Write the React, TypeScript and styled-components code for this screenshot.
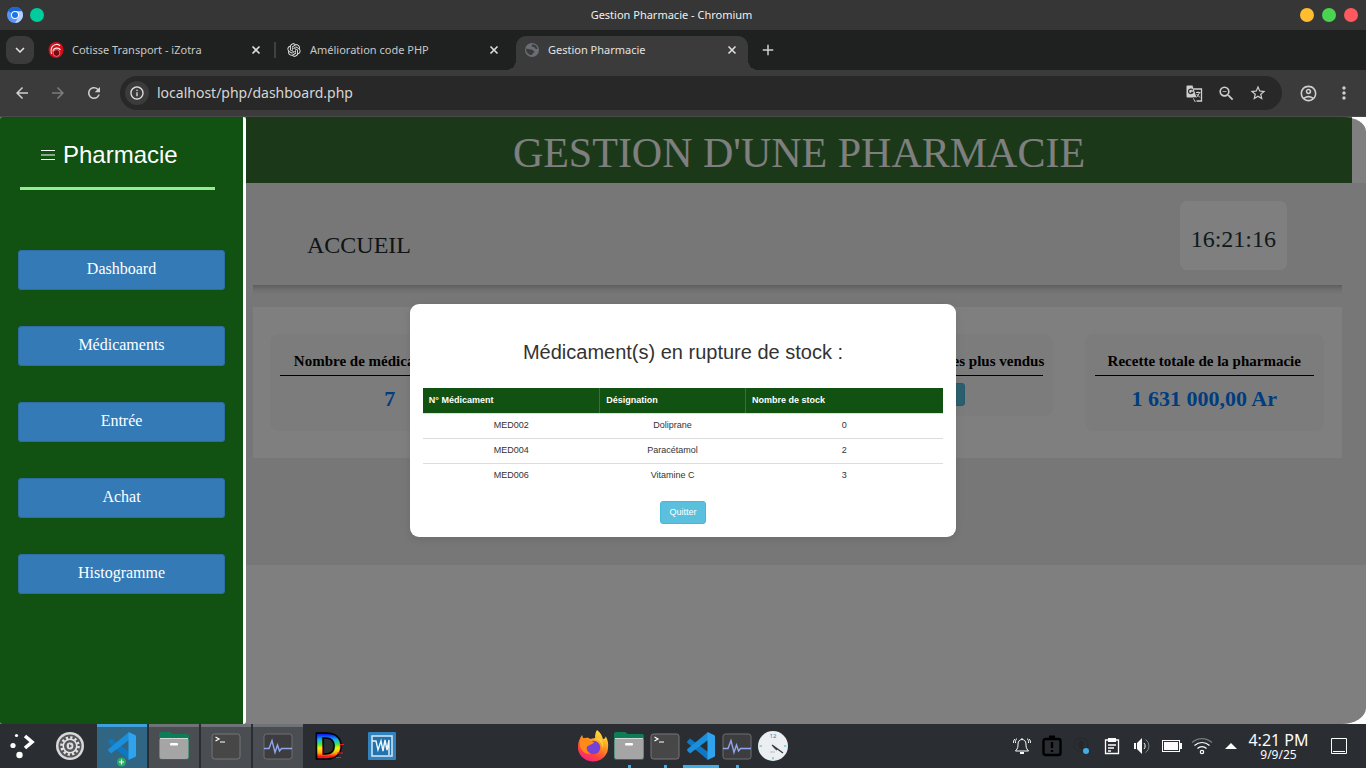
import React from "react";
import styled, { createGlobalStyle } from "styled-components";
import {
  MdAdd,
  MdArrowBack,
  MdArrowForward,
  MdInfoOutline,
  MdKeyboardArrowDown,
  MdMoreVert,
  MdOutlineAccountCircle,
  MdRefresh,
  MdStarBorder,
  MdZoomOut,
} from "react-icons/md";
import { RiOpenaiFill } from "react-icons/ri";

const serif = `"Liberation Serif", "Times New Roman", serif`;
const sans = `"Liberation Sans", Arial, sans-serif`;
const ui = `"Noto Sans", sans-serif`;

const GlobalStyle = createGlobalStyle`
  *, *::before, *::after { box-sizing: border-box; }
  body { margin: 0; background: #fff; }
  h1, h2, h3, p { margin: 0; font-weight: normal; }
  button, input { font: inherit; color: inherit; border: 0; padding: 0; margin: 0; background: none; }
  svg { display: block; flex: none; overflow: visible; }
`;

const Desktop = styled.div`
  display: flex;
  flex-direction: column;
  min-height: 100vh;
  font-family: ${ui};
`;

/* ---------- window frame ---------- */

const TitleBar = styled.header`
  display: grid;
  grid-template-columns: 1fr auto 1fr;
  align-items: center;
  height: 30px;
  padding: 0 8px 0 7px;
  background: #363636;
  color: #f0f0f0;
  font-size: 11px;
`;

const WindowTitle = styled.span`
  margin-right: 22px;
  padding-bottom: 2px;
`;

const DotGroup = styled.div<{ $end?: boolean; $gap: number }>`
  display: flex;
  align-items: center;
  justify-content: ${(p) => (p.$end ? "flex-end" : "flex-start")};
  gap: ${(p) => p.$gap}px;
`;

const Dot = styled.button<{ $color: string }>`
  width: 14px;
  height: 14px;
  border-radius: 50%;
  background: ${(p) => p.$color};
`;

const TabStrip = styled.div`
  display: flex;
  align-items: flex-end;
  height: 40px;
  padding-left: 6px;
  background: #1f2120;
`;

const TabSearch = styled.button`
  display: grid;
  place-items: center;
  width: 28px;
  height: 28px;
  margin: 0 6px 6px 0;
  border-radius: 9px;
  background: #3b3b3b;
  color: #e6e6e6;
`;

const Tab = styled.div<{ $active?: boolean; $divider?: boolean }>`
  position: relative;
  display: flex;
  align-items: center;
  width: 232px;
  height: 34px;
  margin-right: 6px;
  padding: 0 8px 6px;
  border-radius: 10px 10px 0 0;
  background: ${(p) => (p.$active ? "#3b3b3b" : "transparent")};
  color: ${(p) => (p.$active ? "#e3e3e3" : "#c7c7c7")};
  font-size: 11px;

  &::before,
  &::after {
    content: "";
    display: ${(p) => (p.$active ? "block" : "none")};
    position: absolute;
    bottom: 0;
    width: 10px;
    height: 10px;
  }
  &::before {
    left: -10px;
    background: radial-gradient(circle at 0 0, transparent 10px, #3b3b3b 10px);
  }
  &::after {
    display: ${(p) => (p.$active || p.$divider ? "block" : "none")};
    ${(p) =>
      p.$divider
        ? "right: -4px; bottom: 12px; width: 2px; height: 16px; background: #3f4140;"
        : "right: -10px; background: radial-gradient(circle at 100% 0, transparent 10px, #3b3b3b 10px);"}
  }
`;

const TabTitle = styled.button`
  flex: 1;
  margin-left: 8px;
  padding-bottom: 2px;
  text-align: left;
  white-space: nowrap;
`;

const IconButton = styled.button<{ $size?: number; $dim?: boolean }>`
  display: grid;
  place-items: center;
  width: ${(p) => p.$size ?? 36}px;
  height: ${(p) => p.$size ?? 36}px;
  color: ${(p) => (p.$dim ? "#7c7c7c" : "#cfcfcf")};
`;

const NewTab = styled(IconButton)`
  align-self: center;
  margin-left: -4px;
`;

const Toolbar = styled.div`
  display: flex;
  align-items: center;
  height: 47px;
  padding: 0 4px;
  border-bottom: 1px solid #4a4a4a;
  background: #3b3b3b;
`;

const AddressBar = styled.div`
  display: flex;
  align-items: center;
  flex: 1;
  height: 34px;
  margin: 0 8px;
  padding: 0 8px 0 5px;
  border-radius: 17px;
  background: #282828;
`;

const SiteInfo = styled.button`
  display: grid;
  place-items: center;
  width: 24px;
  height: 24px;
  border-radius: 50%;
  background: #3b3b3b;
  color: #e0e0e0;
`;

const Url = styled.input`
  flex: 1;
  min-width: 0;
  margin-left: 8px;
  padding-bottom: 2px;
  color: #d6d6d6;
  font-size: 14px;
  outline: none;
`;

/* ---------- web page ---------- */

const Page = styled.div`
  position: relative;
  display: flex;
  flex: 1;
  background: #fff;
`;

const Sidebar = styled.nav`
  position: relative;
  z-index: 2;
  flex: none;
  width: 246px;
  padding: 20px 18px 0;
  border-right: 3px solid #fff;
  border-radius: 3px;
  background: #115111;
`;

const Brand = styled.h2`
  display: flex;
  align-items: center;
  gap: 8px;
  height: 53px;
  margin: 0 10px 60px 2px;
  padding: 0 0 14px 21px;
  border-bottom: 3px solid #90ee90;
  color: #fff;
  font: 24px/34px ${sans};
`;

const NavButton = styled.button`
  display: block;
  width: 100%;
  height: 40px;
  margin-bottom: 36px;
  padding-bottom: 3px;
  border: 1px solid #2e6da4;
  border-radius: 3px;
  background: #337ab7;
  color: #fff;
  font: 16px/20px ${serif};
`;

const Main = styled.main`
  flex: 1;
  min-width: 0;
  font-family: ${serif};
`;

const Banner = styled.h1`
  height: 66px;
  margin-right: 14px;
  padding-top: 8px;
  background: #367233;
  color: #fff;
  font-size: 42px;
  line-height: 56px;
  text-align: center;
`;

const Content = styled.section`
  padding: 0 24px 107px 7px;
  background: #eee;
`;

const SectionHead = styled.div`
  position: relative;
  display: flex;
  align-items: flex-start;
  justify-content: space-between;
  height: 102px;
  margin-bottom: 22px;
  padding: 18px 55px 0 54px;
  color: #1f343a;

  &::after {
    content: "";
    position: absolute;
    inset: 100% 0 auto 0;
    height: 10px;
    background: linear-gradient(#bcbcbc, #e0e0e0 50%, #eee);
  }
`;

const SectionTitle = styled.h2`
  padding-top: 30px;
  color: #22282c;
  font-size: 24px;
  line-height: 28px;
`;

const Clock = styled.p`
  height: 69px;
  padding: 24px 11px 0;
  border-radius: 7px;
  background: #fff;
  font-size: 24px;
  line-height: 28px;
`;

const Panel = styled.div`
  display: grid;
  grid-template-columns: repeat(4, minmax(0, 1fr));
  align-items: start;
  gap: 32px;
  padding: 27px 18px 27px 17px;
  background: #fff;
`;

const Card = styled.article`
  padding: 16px 10px 10px;
  border-radius: 8px;
  background: #f9f9f9;
  text-align: center;
  white-space: nowrap;
`;

const CardTitle = styled.h3`
  height: 26px;
  margin-bottom: 7px;
  border-bottom: 1px solid #000;
  color: #000;
  font-size: 15px;
  font-weight: bold;
  line-height: 23px;
`;

const CardValue = styled.p`
  margin-bottom: 7px;
  color: #007bff;
  font-size: 22px;
  font-weight: bold;
  line-height: 31px;
`;

const InfoButton = styled.button`
  height: 23px;
  padding: 0 8px;
  border: 1px solid #46b8da;
  border-radius: 3px;
  background: #5bc0de;
  color: #fff;
  font: 9px/13px ${sans};
`;

const CardButton = styled(InfoButton)`
  display: block;
  width: 64px;
  margin: 0 auto;
`;

const Overlay = styled.div`
  position: absolute;
  inset: 0;
  z-index: 1;
  display: grid;
  place-items: center;
  border-radius: 0 24px 24px 0 / 0 14px 16px 0;
  background: rgba(0, 0, 0, 0.5);
`;

const Modal = styled.div`
  width: 40%;
  padding: 13px;
  border-radius: 9px;
  background: #fff;
  color: #333;
  font-family: ${sans};
  text-align: center;
  box-shadow: 0 2px 8px rgba(0, 0, 0, 0.1);
`;

const ModalTitle = styled.h2`
  font-size: 20px;
  line-height: 71px;
`;

const StockTable = styled.table`
  width: 100%;
  margin-bottom: 13px;
  border-collapse: collapse;
  table-layout: fixed;
  font-size: 9px;
  line-height: 13px;

  th,
  td {
    height: 25px;
    padding: 0 6px;
    border-bottom: 1px solid #ddd;
  }
  th {
    border-right: 1px solid #3a6f3a;
    background: #115111;
    color: #fff;
    text-align: left;
  }
  th:last-child {
    border-right: 0;
  }
  tr:last-child td {
    border-bottom: 0;
  }
`;

const Col = styled.col<{ $width: string }>`
  width: ${(p) => p.$width};
`;

/* ---------- taskbar ---------- */

const Taskbar = styled.footer`
  display: grid;
  grid-template-columns: 1fr auto 1fr;
  height: 44px;
  background: #2a2e32;
  color: #fcfcfc;
`;

const TaskGroup = styled.div<{ $end?: boolean }>`
  display: flex;
  align-items: center;
  justify-content: ${(p) => (p.$end ? "flex-end" : "flex-start")};
`;

const Launcher = styled.button<{ $width: number }>`
  display: grid;
  place-items: center;
  width: ${(p) => p.$width}px;
  height: 44px;
`;

const Task = styled.button<{ $active?: boolean }>`
  display: grid;
  place-items: center;
  width: 50px;
  height: 44px;
  margin-right: 2px;
  background: ${(p) => (p.$active ? "#306683" : "#4a4d51")};
  box-shadow: inset 0 3px ${(p) => (p.$active ? "#3d9fdb" : "#6f7276")};
`;

const DockItem = styled.button<{ $mark?: "dot" | "line" }>`
  display: flex;
  flex-direction: column;
  align-items: center;
  justify-content: space-between;
  width: 36px;
  height: 44px;
  padding-top: 6px;

  &::after {
    content: "";
    width: ${(p) => (p.$mark === "line" ? 36 : 3)}px;
    height: 3px;
    background: ${(p) => (p.$mark ? "#3daee9" : "transparent")};
  }
`;

const TrayButton = styled.button<{ $narrow?: boolean }>`
  display: grid;
  place-items: center;
  width: ${(p) => (p.$narrow ? 28 : 30)}px;
  height: 44px;
`;

const TrayClock = styled.button`
  display: flex;
  flex-direction: column;
  align-items: center;
  justify-content: center;
  width: 67px;
  height: 44px;
  padding-top: 2px;
`;

const TrayTime = styled.span`
  font-size: 16px;
  line-height: 16px;
`;

const TrayDate = styled.span`
  font-size: 12px;
  line-height: 14px;
`;

/* ---------- drawings ---------- */

const ChromiumLogo = () => (
  <svg width="16" height="16" viewBox="0 0 16 16">
    <circle cx="8" cy="8" r="8" fill="#5a95f5" />
    <path d="M8 8 L1 4 A8 8 0 0 1 15 4.2 L8 4.2Z" fill="#1a66d8" />
    <path d="M8 4.2H15A8 8 0 0 1 8 16L11.6 9.8Z" fill="#b5d1fb" />
    <circle cx="8" cy="8" r="4" fill="#fff" />
    <circle cx="8" cy="8" r="3" fill="#1a73e8" />
  </svg>
);

const CotisseIcon = () => (
  <svg width="16" height="16" viewBox="0 0 16 16">
    <ellipse cx="8" cy="8" rx="7.500" ry="8" fill="#cf0f1a" />
    <path d="M3.500 12C2 7 4 3 8 2.500 10 2.300 11.500 3 12 4" fill="none" stroke="#ffe3e3" strokeWidth="1.200" />
    <path d="M5 9.500C5 5.500 11 5 12.500 8" fill="none" stroke="#ffe3e3" strokeWidth="1.200" />
    <circle cx="8.500" cy="11" r="3.400" fill="#7a0810" stroke="#f3a4a4" strokeWidth=".7" />
  </svg>
);

const GlobeIcon = () => (
  <svg width="16" height="16" viewBox="0 0 16 16">
    <circle cx="8" cy="8" r="7" fill="#6a6e74" />
    <path d="M2 7C4 6 5.500 7.500 7.500 7.500 9 7.500 8.500 9 10 9 11 9.500 10 11 8.500 11.500L8 13C5 13 2.500 11 2 7ZM8 2.500C7 4 8 5 9.500 5 11 5 10.500 6.500 12 7L13.500 7C13 4 11 2 8 2.500Z" fill="#3b3b3b" />
  </svg>
);

const CloseIcon = () => (
  <svg width="10" height="10" viewBox="0 0 10 10">
    <path d="M1.500 1.500L8.500 8.500M8.500 1.500L1.500 8.500" stroke="#dedede" strokeWidth="1.600" />
  </svg>
);

const TranslateIcon = () => (
  <svg width="17" height="17" viewBox="0 0 17 17">
    <path d="M7.500 4H15.500V16H9L7.500 13" fill="none" stroke="#cfcfcf" strokeWidth="1.300" />
    <path d="M10 7.500H14.500M12 6.500V7.500M10.500 12.500L13.500 8M10.500 9L14 12.500" fill="none" stroke="#cfcfcf" />
    <path d="M1.500 .5H6.500L10.500 12.500H1.500Q.5 12.500 .5 11.500V1.500Q.5 .5 1.500 .5Z" fill="#cfcfcf" />
    <path d="M6.800 5.200A2.300 2.300 0 1 0 7 7.200H4.800M8 13L10 16V13Z" fill="none" stroke="#282828" strokeWidth="1.100" />
  </svg>
);

const MenuIcon = () => (
  <svg width="14" height="10" viewBox="0 0 14 10">
    <path d="M0 .5H14M0 5H14M0 9.500H14" stroke="#fff" strokeWidth="1.200" />
  </svg>
);

const KdeIcon = () => (
  <svg width="28" height="28" viewBox="0 0 28 28" fill="#fff">
    <circle cx="8.500" cy="3.500" r="1.600" />
    <circle cx="5" cy="13.500" r="2.600" />
    <circle cx="11.500" cy="23" r="3.200" />
    <path d="M17 4L24 10L17 16" fill="none" stroke="#fff" strokeWidth="3.600" />
  </svg>
);

const SettingsIcon = () => (
  <svg width="30" height="30" viewBox="0 0 30 30">
    <circle cx="15" cy="15" r="14" fill="#d8d8d8" />
    <circle cx="15" cy="15" r="11.500" fill="#55585b" />
    <circle cx="15" cy="15" r="8.500" fill="none" stroke="#e4e4e4" strokeWidth="2.600" strokeDasharray="2.200 2.250" />
    <circle cx="15" cy="15" r="6.800" fill="none" stroke="#e4e4e4" strokeWidth="1.600" />
    <circle cx="15" cy="15" r="3.400" fill="#dcdcdc" />
    <path d="M14 13L17 15L14 17Z" fill="#55585b" />
  </svg>
);

const CodeIcon = ({ badge }: { badge?: boolean }) => (
  <svg width="32" height={badge ? 40 : 32} viewBox={badge ? "0 -4 32 40" : "0 0 32 32"}>
    <path d="M5 8.500L23 22V30L2.500 13Q1.500 12 2.500 11Z" fill="#0f78c2" />
    <path d="M5 23.500L23 10V2L2.500 19Q1.500 20 2.500 21Z" fill="#1b8fdc" />
    <path d="M22.500 2L29 5Q30 5.500 30 6.500V25.500Q30 26.500 29 27L22.500 30Z" fill="#2fa3ee" />
    {badge && (
      <>
        <circle cx="15.500" cy="32" r="4.500" fill="#27ae60" />
        <path d="M15.500 29.500V34.500M13 32H18" stroke="#fff" strokeWidth="1.200" />
      </>
    )}
  </svg>
);

const FolderIcon = () => (
  <svg width="32" height="32" viewBox="0 0 32 32">
    <path d="M1 4Q1 2 3 2H12L15 4H29Q31 4 31 6V14H1Z" fill="#0c7d55" />
    <rect x="1" y="8" width="30" height="22" rx="2" fill="#117a55" />
    <rect x="1.500" y="8" width="29" height="21" rx="2" fill="#a5a5a5" />
    <path d="M2 8.500H30" stroke="#d5d5d5" />
    <rect x="12" y="13" width="8" height="2.500" rx="1" fill="#fff" />
  </svg>
);

const TerminalIcon = () => (
  <svg width="32" height="32" viewBox="0 0 32 32">
    <rect x="2" y="4" width="28" height="25" rx="2.500" fill="#474747" stroke="#777" />
    <path d="M5.500 7L9 9L5.500 11M10 12H15" fill="none" stroke="#fff" strokeWidth="1.200" />
  </svg>
);

const MonitorIcon = () => (
  <svg width="32" height="32" viewBox="0 0 32 32">
    <rect x="2" y="4" width="28" height="25" rx="2.500" fill="#3d3d3f" stroke="#6f6f72" />
    <path d="M2 18.500H7L10 10.500L13 22.500L15.500 15L17.500 21L19.500 18.500H30" fill="none" stroke="#8fa6ee" strokeWidth="1.400" />
  </svg>
);

const RainbowDIcon = () => (
  <svg width="32" height="32" viewBox="0 0 32 32">
    <defs>
      <linearGradient id="rainbow" x1="0" y1="0.2" x2="0" y2=".85">
        <stop offset="0" stopColor="#0b1cf0" />
        <stop offset=".22" stopColor="#17b8f2" />
        <stop offset=".38" stopColor="#4be83c" />
        <stop offset=".52" stopColor="#ffee10" />
        <stop offset=".7" stopColor="#ffae10" />
        <stop offset=".84" stopColor="#fb1414" />
        <stop offset="1" stopColor="#c70bbd" />
      </linearGradient>
    </defs>
    <text x="0" y="29" fontFamily="DejaVu Sans" fontWeight="bold" fontSize="36" fill="url(#rainbow)" stroke="#000" strokeWidth="1.500">D</text>
    <path d="M27 14.500H31M24 23H30M23 27.500H28" stroke="#f01818" />
  </svg>
);

const WaveIcon = () => (
  <svg width="28" height="28" viewBox="0 0 28 28">
    <rect width="28" height="28" rx="1" fill="#3283bd" />
    <rect x="4" y="4" width="20" height="20" fill="#2273ad" stroke="#d7e9f5" strokeWidth="1.500" />
    <path d="M4 9H8L10 18L13 9L15 19L17 8L19 18L21 8V23" fill="none" stroke="#eef6fb" strokeWidth="1.400" />
  </svg>
);

const FirefoxIcon = () => (
  <svg width="32" height="32" viewBox="0 0 32 32">
    <defs>
      <linearGradient id="fox" x1=".8" y1="0" x2=".3" y2="1">
        <stop offset="0" stopColor="#fff04a" />
        <stop offset=".4" stopColor="#ff9a1f" />
        <stop offset=".75" stopColor="#ff4438" />
        <stop offset="1" stopColor="#f5208c" />
      </linearGradient>
    </defs>
    <path d="M20 0C24 3 25 6 26 9C28 9 29 7 28.500 6C31 10 31.500 14 31 18A15 14 0 0 1 1 17C1 12 2.500 9 5 5L6.500 9C9 7 12 8 13 9L18 8C18 5 18.500 2 20 0Z" fill="url(#fox)" />
    <circle cx="16.500" cy="17.500" r="6.800" fill="#7542d8" />
    <path d="M3 9C6 7 11 8 12.500 10.500L17 12C16 15 12 14 11.500 16C8 16 9 22 14 23.500C9 25 4 21 3 16Z" fill="#ff8a1c" />
    <path d="M17 9C22 9 26 13 25 19C27 15 26 11 23 8Z" fill="#ffd235" />
  </svg>
);

const ClockIcon = () => (
  <svg width="32" height="32" viewBox="0 0 32 32">
    <circle cx="16" cy="16" r="15" fill="#eceff1" />
    <text x="16" y="8" textAnchor="middle" fontFamily="Noto Sans" fontSize="6" fill="#2980b9">12</text>
    <path d="M2.500 16H5M27 16H29.500M16 27V29.500" stroke="#3daee9" />
    <path d="M15 15L26 23M16 16L20 20" stroke="#3a3f43" strokeWidth="1.500" />
    <path d="M13 22H18" stroke="#b9bdc0" />
  </svg>
);

const BellIcon = () => (
  <svg width="18" height="18" viewBox="0 0 18 18" fill="none" stroke="#fcfcfc">
    <path d="M2.500 14C5 11 5 10 5 7C5 4 7 2.500 9 2.500S13 4 13 7C13 10 13 11 15.500 14ZM9 1V2.500M4 1.500C2.500 2.500 2.500 4 2.500 6M2 2C.5 3 .5 5 .5 6M14 1.500C15.500 2.500 15.500 4 15.500 6M16 2C17.500 3 17.500 5 17.500 6" />
    <path d="M7 16H11" strokeWidth="2" />
  </svg>
);

const AlertClipIcon = () => (
  <svg width="22" height="24" viewBox="0 0 22 24" fill="none" stroke="#000">
    <rect x="2.500" y="5" width="17" height="16" rx="2" strokeWidth="2.400" />
    <path d="M8 3.500H14" strokeWidth="4" />
    <path d="M11 8V14M11 16V18" strokeWidth="2.400" />
  </svg>
);

const UpdateIcon = () => (
  <svg width="18" height="18" viewBox="0 0 18 18">
    <circle cx="8" cy="8" r="7" fill="none" stroke="#24282b" />
    <path d="M8 3L12 7.500H10V12H6V7.500H4Z" fill="#24282b" />
    <circle cx="13" cy="14" r="3" fill="#3daee9" />
  </svg>
);

const ClipIcon = () => (
  <svg width="16" height="18" viewBox="0 0 16 18" fill="none" stroke="#fcfcfc">
    <path d="M1.500 3V16.500H14.500V3Z" strokeWidth="1.300" />
    <path d="M4 3H12" strokeWidth="4" />
    <path d="M4 8H12M4 11H10M4 14H7" strokeWidth="1.300" />
  </svg>
);

const VolumeIcon = () => (
  <svg width="18" height="18" viewBox="0 0 18 18">
    <path d="M1 6H3V12H1ZM4 6L9 1V17L4 12Z" fill="#fcfcfc" />
    <path d="M11 6C12.500 7.500 12.500 10.500 11 12" fill="none" stroke="#fcfcfc" />
    <path d="M12.500 2.500C17 5.500 17 12.500 12.500 15.500" fill="none" stroke="#85888b" />
  </svg>
);

const BatteryIcon = () => (
  <svg width="20" height="12" viewBox="0 0 20 12">
    <rect x=".5" y=".5" width="17" height="11" fill="none" stroke="#fcfcfc" />
    <path d="M2 2H16V10H2ZM18 3H20V9H18Z" fill="#fcfcfc" />
  </svg>
);

const WifiIcon = () => (
  <svg width="22" height="18" viewBox="0 0 22 18" fill="none" stroke="#fcfcfc" strokeWidth="1.200">
    <path d="M1 5.500C7 .2 15 .2 21 5.500" stroke="#777a7d" />
    <path d="M3.500 8.500C8 4.500 14 4.500 18.500 8.500M6.500 11.500C9 9 13 9 15.500 11.500" />
    <circle cx="11" cy="15" r="1.700" />
  </svg>
);

const ExpandIcon = () => (
  <svg width="12" height="6" viewBox="0 0 12 6">
    <path d="M0 6L6 0L12 6Z" fill="#fcfcfc" />
  </svg>
);

const ShowDesktopIcon = () => (
  <svg width="16" height="16" viewBox="0 0 16 16" fill="none" stroke="#fcfcfc">
    <path d="M.5 .5H15.500V15.500H.5ZM2 13.500H14" />
  </svg>
);

/* ---------- data ---------- */

const tabs = [
  { title: "Cotisse Transport - iZotra", icon: <CotisseIcon />, divider: true },
  { title: "Amélioration code PHP", icon: <RiOpenaiFill size={16} color="#ececec" /> },
  { title: "Gestion Pharmacie", icon: <GlobeIcon />, active: true },
];

const navItems = ["Dashboard", "Médicaments", "Entrée", "Achat", "Histogramme"];

const stock = [
  { id: "MED002", name: "Doliprane", count: 0 },
  { id: "MED004", name: "Paracétamol", count: 2 },
  { id: "MED006", name: "Vitamine C", count: 3 },
];

export default function App() {
  return (
    <Desktop>
      <GlobalStyle />
      <TitleBar>
        <DotGroup $gap={7}>
          <ChromiumLogo />
          <Dot $color="#00cc9d" aria-label="Pin window" />
        </DotGroup>
        <WindowTitle>Gestion Pharmacie - Chromium</WindowTitle>
        <DotGroup $end $gap={8}>
          <Dot $color="#ffbd2f" aria-label="Minimize" />
          <Dot $color="#49d351" aria-label="Maximize" />
          <Dot $color="#ff5960" aria-label="Close" />
        </DotGroup>
      </TitleBar>

      <TabStrip>
        <TabSearch aria-label="Search tabs">
          <MdKeyboardArrowDown size={18} />
        </TabSearch>
        {tabs.map((t) => (
          <Tab key={t.title} $active={t.active} $divider={t.divider}>
            {t.icon}
            <TabTitle>{t.title}</TabTitle>
            <IconButton $size={16} aria-label="Close tab">
              <CloseIcon />
            </IconButton>
          </Tab>
        ))}
        <NewTab aria-label="New tab">
          <MdAdd size={18} />
        </NewTab>
      </TabStrip>

      <Toolbar>
        <IconButton aria-label="Back"><MdArrowBack size={18} /></IconButton>
        <IconButton $dim aria-label="Forward"><MdArrowForward size={18} /></IconButton>
        <IconButton aria-label="Reload"><MdRefresh size={18} /></IconButton>
        <AddressBar>
          <SiteInfo aria-label="Site information"><MdInfoOutline size={16} /></SiteInfo>
          <Url aria-label="Address" defaultValue="localhost/php/dashboard.php" />
          <IconButton $size={32} aria-label="Translate"><TranslateIcon /></IconButton>
          <IconButton $size={32} aria-label="Zoom out"><MdZoomOut size={19} /></IconButton>
          <IconButton $size={32} aria-label="Bookmark"><MdStarBorder size={18} /></IconButton>
        </AddressBar>
        <IconButton aria-label="Profile"><MdOutlineAccountCircle size={19} /></IconButton>
        <IconButton aria-label="Menu"><MdMoreVert size={20} /></IconButton>
      </Toolbar>

      <Page>
        <Sidebar>
          <Brand>
            <MenuIcon />
            Pharmacie
          </Brand>
          {navItems.map((item) => (
            <NavButton key={item}>{item}</NavButton>
          ))}
        </Sidebar>

        <Main>
          <Banner>GESTION D'UNE PHARMACIE</Banner>
          <Content>
            <SectionHead>
              <SectionTitle>ACCUEIL</SectionTitle>
              <Clock>16:21:16</Clock>
            </SectionHead>
            <Panel>
              <Card>
                <CardTitle>Nombre de médicaments total</CardTitle>
                <CardValue>7</CardValue>
              </Card>
              <Card />
              <Card>
                <CardTitle>Les 5 médicaments les plus vendus</CardTitle>
                <CardButton>Afficher</CardButton>
              </Card>
              <Card>
                <CardTitle>Recette totale de la pharmacie</CardTitle>
                <CardValue>1 631 000,00 Ar</CardValue>
              </Card>
            </Panel>
          </Content>
        </Main>

        <Overlay>
          <Modal role="dialog" aria-labelledby="stock-title">
            <ModalTitle id="stock-title">Médicament(s) en rupture de stock :</ModalTitle>
            <StockTable>
              <colgroup>
                <Col $width="34%" />
                <Col $width="28%" />
                <Col $width="38%" />
              </colgroup>
              <thead>
                <tr>
                  <th>N° Médicament</th>
                  <th>Désignation</th>
                  <th>Nombre de stock</th>
                </tr>
              </thead>
              <tbody>
                {stock.map((row) => (
                  <tr key={row.id}>
                    <td>{row.id}</td>
                    <td>{row.name}</td>
                    <td>{row.count}</td>
                  </tr>
                ))}
              </tbody>
            </StockTable>
            <InfoButton>Quitter</InfoButton>
          </Modal>
        </Overlay>
      </Page>

      <Taskbar>
        <TaskGroup>
          <Launcher $width={43} aria-label="Applications"><KdeIcon /></Launcher>
          <Launcher $width={54} aria-label="Settings"><SettingsIcon /></Launcher>
          <Task $active aria-label="Code"><CodeIcon badge /></Task>
          <Task aria-label="Files"><FolderIcon /></Task>
          <Task aria-label="Terminal"><TerminalIcon /></Task>
          <Task aria-label="Monitor"><MonitorIcon /></Task>
          <Launcher $width={48} aria-label="DOSBox"><RainbowDIcon /></Launcher>
          <Launcher $width={58} aria-label="Waves"><WaveIcon /></Launcher>
        </TaskGroup>
        <TaskGroup>
          <DockItem aria-label="Firefox"><FirefoxIcon /></DockItem>
          <DockItem $mark="dot" aria-label="Files"><FolderIcon /></DockItem>
          <DockItem $mark="dot" aria-label="Terminal"><TerminalIcon /></DockItem>
          <DockItem $mark="line" aria-label="Code"><CodeIcon /></DockItem>
          <DockItem $mark="dot" aria-label="Monitor"><MonitorIcon /></DockItem>
          <DockItem aria-label="Clock"><ClockIcon /></DockItem>
        </TaskGroup>
        <TaskGroup $end>
          <TrayButton aria-label="Notifications"><BellIcon /></TrayButton>
          <TrayButton aria-label="Alerts"><AlertClipIcon /></TrayButton>
          <TrayButton aria-label="Updates"><UpdateIcon /></TrayButton>
          <TrayButton aria-label="Clipboard"><ClipIcon /></TrayButton>
          <TrayButton aria-label="Volume"><VolumeIcon /></TrayButton>
          <TrayButton aria-label="Battery"><BatteryIcon /></TrayButton>
          <TrayButton aria-label="Network"><WifiIcon /></TrayButton>
          <TrayButton $narrow aria-label="Show hidden icons"><ExpandIcon /></TrayButton>
          <TrayClock>
            <TrayTime>4:21 PM</TrayTime>
            <TrayDate>9/9/25</TrayDate>
          </TrayClock>
          <Launcher $width={54} aria-label="Show desktop"><ShowDesktopIcon /></Launcher>
        </TaskGroup>
      </Taskbar>
    </Desktop>
  );
}
